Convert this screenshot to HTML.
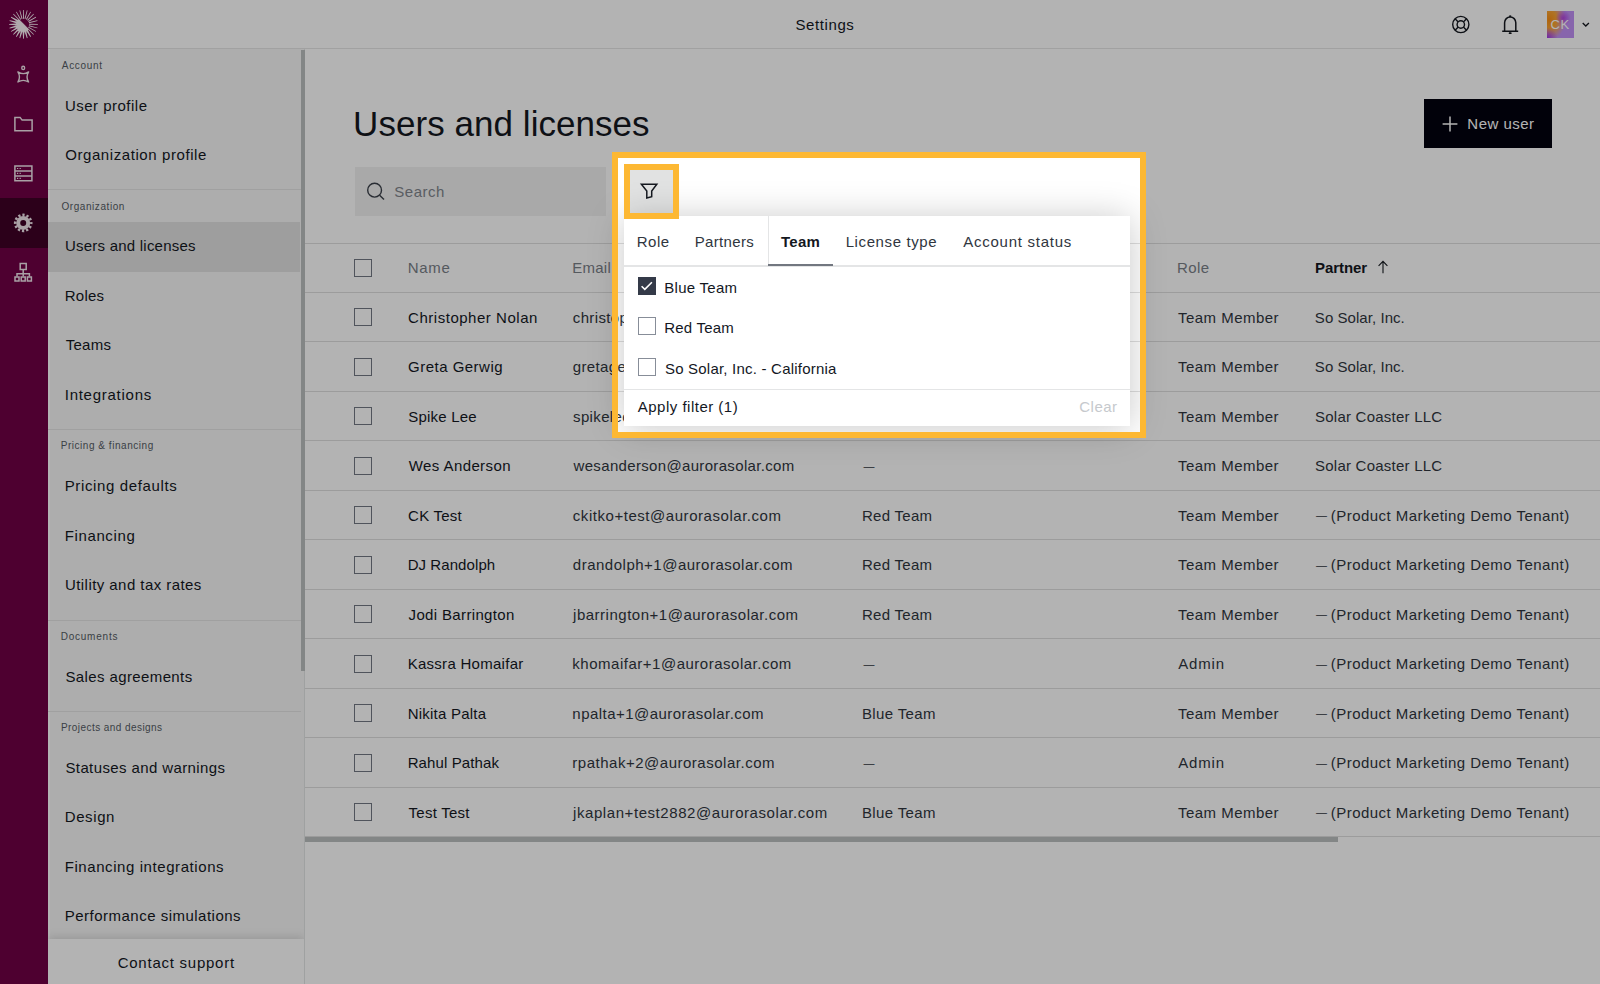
<!DOCTYPE html>
<html lang="en">
<head>
<meta charset="utf-8">
<title>Settings</title>
<style>
*{box-sizing:border-box;margin:0;padding:0}
html,body{width:1600px;height:984px;overflow:hidden;background:#fff}
body{font-family:"Liberation Sans",sans-serif;font-size:15px;color:#2f353d;position:relative}
.abs{position:absolute}
span{position:absolute;white-space:nowrap;line-height:20px}
#nav{position:absolute;left:0;top:0;width:48px;height:984px;background:#700045}
#nav .act{position:absolute;left:0;top:198px;width:48px;height:49.5px;background:#3f0025}
#hdr{position:absolute;left:48px;top:0;width:1552px;height:49px;background:#fff;border-bottom:1px solid #e6e6e6}
#side{position:absolute;left:48px;top:49px;width:257px;height:935px;background:#f7f7f7;border-right:1px solid #e3e6e6;overflow:hidden}
.lab{font-size:10px;line-height:12px;color:#555b64}
.it{color:#14181f}
#side .on{position:absolute;left:0;width:252px;height:49.5px;background:#e2e2e2}
#side .sep{position:absolute;left:0;width:253px;height:1px;background:#e4e4e4}
#side .thumb{position:absolute;left:253px;top:1px;width:4px;height:620.7px;background:#bbbfbf}
#side .foot{position:absolute;left:0;top:889.6px;width:256px;height:46px;background:#fff;box-shadow:0 -2px 9px rgba(0,0,0,.13)}
#main{position:absolute;left:305px;top:49px;width:1295px;height:935px;background:#fff}
#title{font-size:35px;line-height:44px;color:#14181f}
#new{position:absolute;left:1424px;top:99px;width:127.6px;height:49px;background:#02020f}
#search{position:absolute;left:354.5px;top:166.5px;width:251.5px;height:49.5px;background:#f1f1f1}
.ln{position:absolute;left:305px;width:1295px;height:1px;background:#dfdfdf}
.bx{position:absolute;left:354.3px;width:18px;height:18px;border:1.5px solid #727883;background:#fff}
.r{color:#30363e}
.h{color:#7a8088}
#hscroll{position:absolute;left:305px;top:836.6px;width:1032.6px;height:5.4px;background:#bbbfbf}
#dd{position:absolute;left:624px;top:216px;width:506px;height:210px;background:#fff;box-shadow:0 2px 34px rgba(0,0,0,.22)}
.cb{position:absolute;left:637.6px;width:18px;height:18px;border:1.4px solid #878d98;background:#fff}
.cb.ckd{background:#343a48;border-color:#343a48}
#fbtn{position:absolute;left:630.3px;top:170px;width:43px;height:42.6px;background:#e1e2e2}
#hole{position:absolute;left:618px;top:158px;width:522px;height:274px;box-shadow:0 0 0 6px #fdb833,0 0 0 3000px rgba(0,0,0,.298);pointer-events:none}
#fring{position:absolute;left:624.2px;top:164px;width:55px;height:54.7px;border:6.2px solid #fdb833}
</style>
</head>
<body>
<div id="hdr"></div>
<span style="left:795.43px;top:15.00px;letter-spacing:0.605px;color:#14181f">Settings</span>
<div id="nav"><div class="act"></div>
<svg class="abs" style="left:0;top:0" width="48" height="300" viewBox="0 0 48 300" fill="none" stroke="none">
<path d="M29.10 24.80L37.90 24.66L37.90 23.94L29.10 23.80ZM28.78 26.23L37.32 28.37L37.50 27.68L29.04 25.27ZM28.10 27.53L35.79 31.81L36.15 31.19L28.60 26.67ZM23.15 24.65L33.43 34.74L33.94 34.23L23.85 23.95ZM24.75 28.77L30.37 36.96L31.03 36.58L26.75 27.62ZM23.55 28.94L26.86 38.31L27.59 38.11L25.78 28.35ZM22.35 28.80L23.12 38.70L23.88 38.70L24.65 28.80ZM21.22 28.35L19.41 38.11L20.14 38.31L23.45 28.94ZM20.25 27.62L15.97 36.58L16.63 36.96L22.25 28.77ZM19.50 26.67L13.05 34.21L13.59 34.75L21.13 28.30ZM19.03 25.55L10.84 31.17L11.22 31.83L20.18 27.55ZM18.86 24.35L9.49 27.66L9.69 28.39L19.45 26.58ZM19.00 23.15L9.10 23.92L9.10 24.68L19.00 25.45ZM19.45 22.02L9.69 20.21L9.49 20.94L18.86 24.25ZM20.18 21.05L11.22 16.77L10.84 17.43L19.03 23.05ZM23.85 23.95L13.57 13.86L13.06 14.37L23.15 24.65ZM21.13 19.20L16.61 11.65L15.99 12.01L20.27 19.70ZM22.53 18.76L20.12 10.30L19.43 10.48L21.57 19.02ZM24.00 18.70L23.86 9.90L23.14 9.90L23.00 18.70ZM25.43 19.02L27.57 10.48L26.88 10.30L24.47 18.76ZM26.73 19.70L31.01 12.01L30.39 11.65L25.87 19.20ZM27.81 20.69L33.94 14.37L33.43 13.86L27.11 19.99ZM28.60 21.93L36.15 17.41L35.79 16.79L28.10 21.07ZM29.04 23.33L37.50 20.92L37.32 20.23L28.78 22.37Z" fill="#fbf3f7"/>
<path d="M18.41 19.21A7.2 7.2 0 0 0 28.59 29.39Z" fill="#fbf3f7"/>

<g stroke="#f1e6ec" stroke-width="1.4" fill="none" stroke-linejoin="round">
<ellipse cx="23.2" cy="67.9" rx="1.45" ry="1.7"/>
<path d="M17.9 71.9Q23.2 75.4 28.6 71.9Q25.5 77 28.6 82Q23.2 78.7 17.9 82Q21 77 17.9 71.9Z"/>
<path d="M14.9 117.4h5.2l2 2.7h10v10.6H14.9Z" stroke-width="1.5" stroke-linejoin="miter"/>
<path d="M14.9 166h17v14.8h-17ZM14.9 170.9h17M14.9 175.9h17" stroke-width="1.5" stroke-linejoin="miter"/>
<path d="M17 168.5h1.2M19.6 168.5h1.2M17 173.4h1.2M19.6 173.4h1.2M17 178.4h1.2M19.6 178.4h1.2" stroke-width="1.1"/>
</g>
<g>
<circle cx="23.2" cy="222.9" r="8" stroke="#f1e6ec" stroke-width="2.6" stroke-dasharray="2.3 1.889" stroke-dashoffset="1.1" fill="none"/>
<circle cx="23.2" cy="222.9" r="5" stroke="#f1e6ec" stroke-width="4" fill="none"/>
</g>
<g stroke="#f1e6ec" stroke-width="1.5" fill="none" stroke-linejoin="miter">
<path d="M20.2 263.4h6v6h-6ZM23.2 269.4v7M17 276.4v-2.6h12.4v2.6"/>
<path d="M15 277h4v4h-4ZM21.2 277h4v4h-4ZM27.4 277h4v4h-4Z"/>
</g>
</svg>

</div>
<div id="side">
<div class="abs" style="left:0;top:0;width:2px;height:935px;background:#fff"></div>
<div class="sep" style="top:140.3px"></div>
<div class="sep" style="top:380.0px"></div>
<div class="sep" style="top:570.5px"></div>
<div class="sep" style="top:661.5px"></div>
<div class="on" style="top:173.00px"></div>
<div class="foot"></div>
</div>
<span class="lab" style="left:61.80px;top:60.20px;letter-spacing:0.699px;">Account</span>
<span class="it" style="left:64.96px;top:95.50px;letter-spacing:0.487px;">User profile</span>
<span class="it" style="left:65.20px;top:145.00px;letter-spacing:0.581px;">Organization profile</span>
<span class="lab" style="left:61.45px;top:200.70px;letter-spacing:0.569px;">Organization</span>
<span class="it" style="left:64.96px;top:236.25px;letter-spacing:0.228px;">Users and licenses</span>
<span class="it" style="left:64.73px;top:285.75px;letter-spacing:0.248px;">Roles</span>
<span class="it" style="left:65.67px;top:335.25px;letter-spacing:0.281px;">Teams</span>
<span class="it" style="left:64.73px;top:384.75px;letter-spacing:0.742px;">Integrations</span>
<span class="lab" style="left:60.70px;top:440.20px;letter-spacing:0.538px;">Pricing &amp; financing</span>
<span class="it" style="left:64.73px;top:476.25px;letter-spacing:0.639px;">Pricing defaults</span>
<span class="it" style="left:64.73px;top:525.75px;letter-spacing:0.622px;">Financing</span>
<span class="it" style="left:64.96px;top:575.25px;letter-spacing:0.443px;">Utility and tax rates</span>
<span class="lab" style="left:60.70px;top:630.70px;letter-spacing:0.772px;">Documents</span>
<span class="it" style="left:65.43px;top:666.75px;letter-spacing:0.389px;">Sales agreements</span>
<span class="lab" style="left:61.00px;top:722.20px;letter-spacing:0.433px;">Projects and designs</span>
<span class="it" style="left:65.43px;top:757.50px;letter-spacing:0.394px;">Statuses and warnings</span>
<span class="it" style="left:64.73px;top:807.00px;letter-spacing:0.604px;">Design</span>
<span class="it" style="left:64.73px;top:856.50px;letter-spacing:0.575px;">Financing integrations</span>
<span class="it" style="left:64.73px;top:906.00px;letter-spacing:0.49px;">Performance simulations</span>
<span class="it" style="left:117.70px;top:952.50px;letter-spacing:0.754px;">Contact support</span>
<div class="abs" style="left:300.8px;top:50px;width:4.2px;height:620.7px;background:#bbbfbf"></div>
<div id="main"></div>
<span id="title" style="left:353.11px;top:101.60px;letter-spacing:0.047px;">Users and licenses</span>
<div id="new"></div>
<svg class="abs" style="left:1441px;top:115px" width="18" height="18" viewBox="0 0 18 18"><path d="M9 1.6v14.8M1.6 9h14.8" stroke="#fff" stroke-width="1.5" fill="none"/></svg>
<span style="left:1467.33px;top:113.50px;letter-spacing:0.484px;color:#fff">New user</span>
<div id="search"></div>
<svg class="abs" style="left:364px;top:180px" width="24" height="24" viewBox="0 0 24 24"><circle cx="10.6" cy="10.2" r="6.9" stroke="#3b414a" stroke-width="1.4" fill="none"/><path d="M15.6 15.2l4.4 4.4" stroke="#3b414a" stroke-width="1.4" fill="none"/></svg>
<span style="left:394.33px;top:181.50px;letter-spacing:0.497px;color:#80858c">Search</span>
<div class="ln" style="top:243.00px"></div>
<div class="ln" style="top:292.00px"></div>
<div class="ln" style="top:341.00px"></div>
<div class="ln" style="top:391.00px"></div>
<div class="ln" style="top:440.00px"></div>
<div class="ln" style="top:490.00px"></div>
<div class="ln" style="top:539.00px"></div>
<div class="ln" style="top:589.00px"></div>
<div class="ln" style="top:638.00px"></div>
<div class="ln" style="top:688.00px"></div>
<div class="ln" style="top:737.00px"></div>
<div class="ln" style="top:787.00px"></div>
<div class="ln" style="top:836.00px"></div>
<div class="bx" style="top:259.10px"></div>
<div class="bx" style="top:308.20px"></div>
<div class="bx" style="top:357.70px"></div>
<div class="bx" style="top:407.20px"></div>
<div class="bx" style="top:456.70px"></div>
<div class="bx" style="top:506.20px"></div>
<div class="bx" style="top:555.70px"></div>
<div class="bx" style="top:605.20px"></div>
<div class="bx" style="top:654.70px"></div>
<div class="bx" style="top:704.20px"></div>
<div class="bx" style="top:753.70px"></div>
<div class="bx" style="top:803.20px"></div>
<span class="h" style="left:407.63px;top:257.80px;letter-spacing:0.723px;">Name</span>
<span class="h" style="left:572.13px;top:257.80px;letter-spacing:0.288px;">Email</span>
<span class="h" style="left:862.87px;top:257.80px;letter-spacing:-0.256px;">Team</span>
<span class="h" style="left:1176.93px;top:257.80px;letter-spacing:0.41px;">Role</span>
<span style="left:1314.96px;top:257.80px;letter-spacing:-0.062px;font-weight:700;color:#14181f">Partner</span>
<svg class="abs" style="left:1376px;top:260.0px" width="14" height="14" viewBox="0 0 14 14"><path d="M7 13.2V1.6M2.6 5.8L7 1.4l4.4 4.4" stroke="#14181f" stroke-width="1.1" fill="none"/></svg>
<span class="it" style="left:408.10px;top:307.90px;letter-spacing:0.522px;">Christopher Nolan</span>
<span class="r" style="left:572.83px;top:307.90px;letter-spacing:0.35px;">christophernolan@aurorasolar.com</span>
<span class="r" style="left:863.6px;top:307.00px;font-size:11px">—</span>
<span class="r" style="left:1177.97px;top:307.90px;letter-spacing:0.475px;">Team Member</span>
<span class="r" style="left:1314.83px;top:307.90px;letter-spacing:0.054px;">So Solar, Inc.</span>
<span class="it" style="left:408.10px;top:357.40px;letter-spacing:0.477px;">Greta Gerwig</span>
<span class="r" style="left:572.83px;top:357.40px;letter-spacing:0.35px;">gretagerwig@aurorasolar.com</span>
<span class="r" style="left:863.6px;top:356.50px;font-size:11px">—</span>
<span class="r" style="left:1177.97px;top:357.40px;letter-spacing:0.475px;">Team Member</span>
<span class="r" style="left:1314.83px;top:357.40px;letter-spacing:0.054px;">So Solar, Inc.</span>
<span class="it" style="left:408.33px;top:406.90px;letter-spacing:0.195px;">Spike Lee</span>
<span class="r" style="left:573.07px;top:406.90px;letter-spacing:0.35px;">spikelee@aurorasolar.com</span>
<span class="r" style="left:863.6px;top:406.00px;font-size:11px">—</span>
<span class="r" style="left:1177.97px;top:406.90px;letter-spacing:0.475px;">Team Member</span>
<span class="r" style="left:1315.03px;top:406.90px;letter-spacing:0.237px;">Solar Coaster LLC</span>
<span class="it" style="left:408.80px;top:456.40px;letter-spacing:0.403px;">Wes Anderson</span>
<span class="r" style="left:573.53px;top:456.40px;letter-spacing:0.336px;">wesanderson@aurorasolar.com</span>
<span class="r" style="left:863.6px;top:455.50px;font-size:11px">—</span>
<span class="r" style="left:1177.97px;top:456.40px;letter-spacing:0.475px;">Team Member</span>
<span class="r" style="left:1315.03px;top:456.40px;letter-spacing:0.237px;">Solar Coaster LLC</span>
<span class="it" style="left:408.10px;top:505.90px;letter-spacing:0.206px;">CK Test</span>
<span class="r" style="left:572.83px;top:505.90px;letter-spacing:0.542px;">ckitko+test@aurorasolar.com</span>
<span class="r" style="left:861.93px;top:505.90px;letter-spacing:0.298px;">Red Team</span>
<span class="r" style="left:1177.97px;top:505.90px;letter-spacing:0.475px;">Team Member</span>
<span class="r" style="left:1316px;top:505.00px;font-size:11px">—</span>
<span class="r" style="left:1330.80px;top:505.90px;letter-spacing:0.453px;">(Product Marketing Demo Tenant)</span>
<span class="it" style="left:407.63px;top:555.40px;letter-spacing:0.08px;">DJ Randolph</span>
<span class="r" style="left:572.83px;top:555.40px;letter-spacing:0.502px;">drandolph+1@aurorasolar.com</span>
<span class="r" style="left:861.93px;top:555.40px;letter-spacing:0.298px;">Red Team</span>
<span class="r" style="left:1177.97px;top:555.40px;letter-spacing:0.475px;">Team Member</span>
<span class="r" style="left:1316px;top:554.50px;font-size:11px">—</span>
<span class="r" style="left:1330.80px;top:555.40px;letter-spacing:0.453px;">(Product Marketing Demo Tenant)</span>
<span class="it" style="left:408.57px;top:604.90px;letter-spacing:0.349px;">Jodi Barrington</span>
<span class="r" style="left:573.07px;top:604.90px;letter-spacing:0.509px;">jbarrington+1@aurorasolar.com</span>
<span class="r" style="left:861.93px;top:604.90px;letter-spacing:0.298px;">Red Team</span>
<span class="r" style="left:1177.97px;top:604.90px;letter-spacing:0.475px;">Team Member</span>
<span class="r" style="left:1316px;top:604.00px;font-size:11px">—</span>
<span class="r" style="left:1330.80px;top:604.90px;letter-spacing:0.453px;">(Product Marketing Demo Tenant)</span>
<span class="it" style="left:407.63px;top:654.40px;letter-spacing:0.282px;">Kassra Homaifar</span>
<span class="r" style="left:572.36px;top:654.40px;letter-spacing:0.507px;">khomaifar+1@aurorasolar.com</span>
<span class="r" style="left:863.6px;top:653.50px;font-size:11px">—</span>
<span class="r" style="left:1178.20px;top:654.40px;letter-spacing:0.831px;">Admin</span>
<span class="r" style="left:1316px;top:653.50px;font-size:11px">—</span>
<span class="r" style="left:1330.80px;top:654.40px;letter-spacing:0.453px;">(Product Marketing Demo Tenant)</span>
<span class="it" style="left:407.63px;top:703.90px;letter-spacing:0.228px;">Nikita Palta</span>
<span class="r" style="left:572.36px;top:703.90px;letter-spacing:0.455px;">npalta+1@aurorasolar.com</span>
<span class="r" style="left:861.93px;top:703.90px;letter-spacing:0.36px;">Blue Team</span>
<span class="r" style="left:1177.97px;top:703.90px;letter-spacing:0.475px;">Team Member</span>
<span class="r" style="left:1316px;top:703.00px;font-size:11px">—</span>
<span class="r" style="left:1330.80px;top:703.90px;letter-spacing:0.453px;">(Product Marketing Demo Tenant)</span>
<span class="it" style="left:407.63px;top:753.40px;letter-spacing:0.125px;">Rahul Pathak</span>
<span class="r" style="left:572.36px;top:753.40px;letter-spacing:0.509px;">rpathak+2@aurorasolar.com</span>
<span class="r" style="left:863.6px;top:752.50px;font-size:11px">—</span>
<span class="r" style="left:1178.20px;top:753.40px;letter-spacing:0.831px;">Admin</span>
<span class="r" style="left:1316px;top:752.50px;font-size:11px">—</span>
<span class="r" style="left:1330.80px;top:753.40px;letter-spacing:0.453px;">(Product Marketing Demo Tenant)</span>
<span class="it" style="left:408.57px;top:802.90px;letter-spacing:0.25px;">Test Test</span>
<span class="r" style="left:573.07px;top:802.90px;letter-spacing:0.567px;">jkaplan+test2882@aurorasolar.com</span>
<span class="r" style="left:861.93px;top:802.90px;letter-spacing:0.36px;">Blue Team</span>
<span class="r" style="left:1177.97px;top:802.90px;letter-spacing:0.475px;">Team Member</span>
<span class="r" style="left:1316px;top:802.00px;font-size:11px">—</span>
<span class="r" style="left:1330.80px;top:802.90px;letter-spacing:0.453px;">(Product Marketing Demo Tenant)</span>
<div id="hscroll"></div>
<div id="fbtn"></div>
<div id="dd">
<div class="abs" style="left:0;top:49px;width:506px;height:1.5px;background:#e4e5e6"></div>
<div class="abs" style="left:143.5px;top:0;width:1px;height:49px;background:#e4e5e6"></div>
<div class="abs" style="left:143.5px;top:48.2px;width:65.5px;height:1.6px;background:#727780"></div>
<div class="abs" style="left:0;top:172.6px;width:506px;height:1.2px;background:#e4e5e6"></div>
</div>
<span class="r" style="left:636.63px;top:231.80px;letter-spacing:0.577px;">Role</span>
<span class="r" style="left:694.73px;top:231.80px;letter-spacing:0.336px;">Partners</span>
<span class="r" style="left:845.63px;top:231.80px;letter-spacing:0.614px;">License type</span>
<span class="r" style="left:963.30px;top:231.80px;letter-spacing:0.737px;">Account status</span>
<span style="left:781.00px;top:231.80px;letter-spacing:0.281px;font-weight:700;color:#14181f">Team</span>
<div class="cb ckd" style="top:276.8px"></div>
<svg class="abs" style="left:637.8px;top:276.9px" width="17.5" height="17.5" viewBox="0 0 17.5 17.5"><path d="M3.6 9.2l3.2 3.1 7.1-7" stroke="#fff" stroke-width="1.6" fill="none"/></svg>
<div class="cb" style="top:317.3px"></div>
<div class="cb" style="top:358px"></div>
<span style="left:664.23px;top:277.70px;letter-spacing:0.285px;color:#14181f">Blue Team</span>
<span style="left:664.23px;top:318.10px;letter-spacing:0.212px;color:#14181f">Red Team</span>
<span style="left:664.93px;top:358.70px;letter-spacing:0.214px;color:#14181f">So Solar, Inc. - California</span>
<span style="left:637.80px;top:397.40px;letter-spacing:0.49px;color:#14181f">Apply filter (1)</span>
<span style="left:1079.30px;top:397.40px;letter-spacing:0.483px;color:#c6c9cd">Clear</span>
<svg class="abs" style="left:1440px;top:4px" width="160" height="40" viewBox="1440 4 160 40" fill="none" stroke="#14181f" stroke-width="1.4">
<circle cx="1460.8" cy="24.5" r="8.1"/><circle cx="1460.8" cy="24.5" r="3.7"/>
<path d="M1455.1 18.8l3.1 3.1M1466.5 18.8l-3.1 3.1M1455.1 30.2l3.1-3.1M1466.5 30.2l-3.1-3.1"/>
<path d="M1502.2 31.2h16M1504.6 31.2v-8.4a5.6 5.9 0 0 1 11.2 0v8.4M1509 32.6q1.2 1.2 2.4 0M1509.4 16.4q.8-.9 1.6 0" stroke-width="1.5"/>
<path d="M1582.7 23.1l3.1 2.9 3.1-2.9" stroke-width="1.35"/>
</svg>
<div class="abs" style="left:1547px;top:11px;width:27px;height:27px;background:radial-gradient(circle at 0% 100%,#a035e6 0%,rgba(160,53,230,0) 28%),radial-gradient(circle at 60% 26%,#b245e2 0%,rgba(178,69,226,0) 30%),radial-gradient(ellipse 62% 75% at 8% 32%,#f98f14 0%,#f9a535 45%,rgba(249,165,53,0) 100%),#c091f6"></div>
<span style="left:1550.39px;top:14.50px;letter-spacing:0.69px;color:#fff;font-size:13px">CK</span>
<div id="hole"></div>
<div id="fring"></div>
<svg class="abs" style="left:630px;top:170px" width="43" height="43" viewBox="630 170 43 43"><path d="M641.4 184.2h15.4l-5.1 6.8v5.6l-4.9 1.4v-7Z" stroke="#14181f" stroke-width="1.5" fill="none" stroke-linejoin="miter"/></svg>
</body>
</html>
